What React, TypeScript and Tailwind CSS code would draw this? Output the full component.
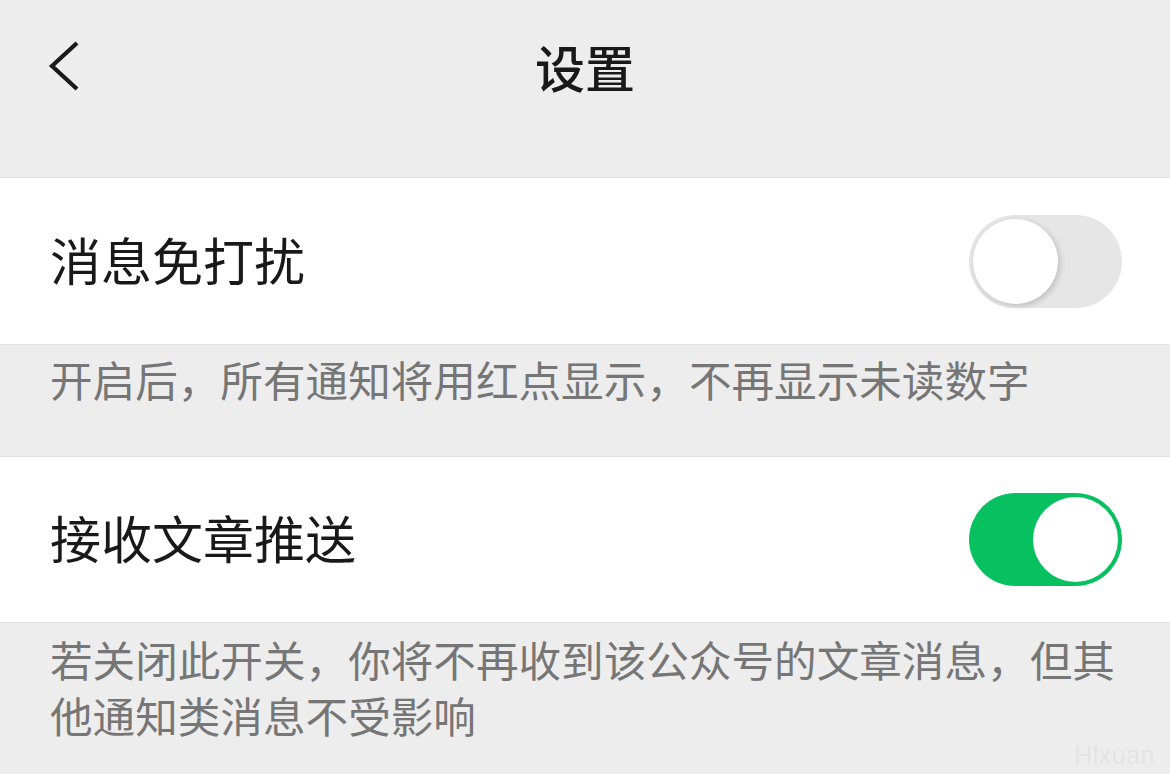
import React, { useState } from "react";

const FONT = { fontFamily: '"Noto Sans CJK SC", "Noto Sans", sans-serif' };

function Toggle({ on, onClick }: { on: boolean; onClick: () => void }) {
  return (
    <button
      onClick={onClick}
      className={`flex h-[93px] w-[153px] items-center rounded-full p-[4px] transition-colors ${
        on ? "justify-end bg-[#07c160]" : "justify-start bg-[#e6e6e6]"
      }`}
    >
      <span
        className={`block h-[85px] w-[85px] rounded-full bg-white ${
          on ? "" : "shadow-[2px_2px_6px_rgba(0,0,0,0.18)]"
        }`}
      />
    </button>
  );
}

export default function App() {
  const [mute, setMute] = useState(false);
  const [push, setPush] = useState(true);

  return (
    <div className="flex h-[774px] w-[1170px] flex-col bg-[#ededed] overflow-hidden" style={FONT}>
      {/* nav bar */}
      <div className="h-[178px] shrink-0 border-b border-[#e0e0e0]">
        <div className="grid h-[132px] grid-cols-[1fr_auto_1fr] items-center px-[48px]">
          <svg width="34" height="52" viewBox="0 0 34 52">
            <polyline points="29,3 4,26 29,49" fill="none" stroke="#1a1a1a" strokeWidth="4.2" />
          </svg>
          <div className="text-[50px] font-medium leading-none text-[#191919]">设置</div>
          <div />
        </div>
      </div>

      <div className="flex h-[167px] shrink-0 items-center justify-between border-b border-[#e2e2e2] bg-white pl-[50px] pr-[48px]">
        <span className="mt-[-4px] text-[51px] leading-none text-[#191919]">消息免打扰</span>
        <Toggle on={mute} onClick={() => setMute(!mute)} />
      </div>

      <div className="h-[112px] shrink-0 border-b border-[#e0e0e0] pl-[50px] pr-[40px] pt-[6px] text-[42.6px] leading-[56px] text-[#767676]">
        开启后，所有通知将用红点显示，不再显示未读数字
      </div>

      <div className="flex h-[166px] shrink-0 items-center justify-between border-b border-[#e2e2e2] bg-white pl-[50px] pr-[48px]">
        <span className="mt-[-4px] text-[51px] leading-none text-[#191919]">接收文章推送</span>
        <Toggle on={push} onClick={() => setPush(!push)} />
      </div>

      <div className="flex flex-1 flex-col pt-[8px] pr-[15px]">
        <p className="pl-[50px] pr-[30px] text-[42.6px] leading-[56px] text-[#767676]">
          若关闭此开关，你将不再收到该公众号的文章消息，但其他通知类消息不受影响
        </p>
        <div
          className="mt-auto mb-[15px] self-end text-[25px] leading-none tracking-[0.5px] text-[#e4e4e4]"
          style={{ fontFamily: '"Liberation Sans", sans-serif' }}
        >
          Hlxuan
        </div>
      </div>
    </div>
  );
}
